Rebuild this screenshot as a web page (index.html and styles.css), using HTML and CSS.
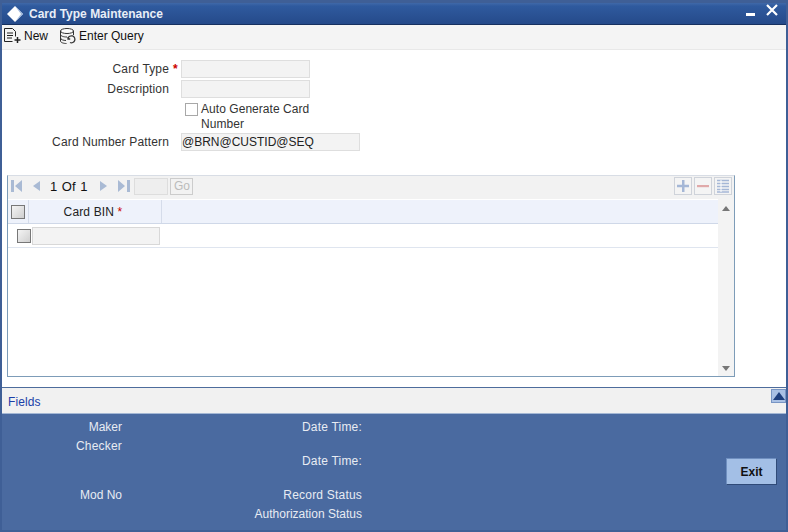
FILE: index.html
```html
<!DOCTYPE html>
<html lang="en">
<head>
<meta charset="utf-8">
<title>Card Type Maintenance</title>
<link rel="stylesheet" href="styles.css">
</head>
<body>
<div class="window">
  <header class="titlebar">
    <svg class="logo" width="20" height="16" viewBox="0 0 20 16"><path d="M10 0 18 8 10 16 2 8Z" fill="#fff"/><path d="M10 0 18 8 10 16 16 8Z" fill="#9db8dc"/></svg>
    <span class="title">Card Type Maintenance</span>
    <svg class="winbtn" width="40" height="16" viewBox="0 0 40 16"><path d="M3 9h9v3H3z" fill="#fff"/><path d="M24 1l10 10M34 1l-10 10" stroke="#fff" stroke-width="2.2" fill="none"/></svg>
  </header>
  <nav class="toolbar">
    <button class="tool">
      <svg width="17" height="15" viewBox="0 0 17 15"><path d="M.5.5h8l3 3v5M.5.5v13h8" fill="none" stroke="#222"/><path d="M3 5h6M3 7.500h6M3 10h5" stroke="#222"/><path d="M13.500 9v6M10.500 12h6" stroke="#222" stroke-width="1.500"/></svg>
      New
    </button>
    <button class="tool">
      <svg width="17" height="16" viewBox="0 0 17 16"><ellipse cx="8" cy="3" rx="6.500" ry="2.500" fill="#fff" stroke="#333"/><path d="M1.500 3v10c0 1.500 3 2.500 6 2.500M14.500 3v4M1.500 6.500c0 1.500 3 2.500 6.500 2.500M1.500 10c0 1.500 3 2.500 5.500 2.500" fill="none" stroke="#333"/><path d="M9 10.500a3.500 3.500 0 1 1 2 4M9 9v2h2.200" fill="none" stroke="#333" stroke-width="1.300"/></svg>
      Enter Query
    </button>
  </nav>
  <main class="form">
    <div class="fields">
      <div class="field">
        <label class="lbl">Card Type</label><span class="req">*</span>
        <input class="input short" type="text" aria-label="Card Type">
      </div>
      <div class="field">
        <label class="lbl">Description</label>
        <input class="input short" type="text" aria-label="Description">
      </div>
      <div class="field check-field">
        <span class="check"></span>
        <span class="check-text">Auto Generate Card Number</span>
      </div>
      <div class="field">
        <label class="lbl">Card Number Pattern</label>
        <input class="input long" type="text" value="@BRN@CUSTID@SEQ" aria-label="Card Number Pattern">
      </div>
    </div>
    <section class="grid-panel">
      <div class="pager">
        <svg class="pg" width="12" height="12" viewBox="0 0 12 12"><path d="M0 0h3v12H0zM11 0v12L4 6z" fill="#a9bad4"/></svg>
        <svg class="pg gap-a" width="9" height="12" viewBox="0 0 9 12"><path d="M8 1v10L1 6z" fill="#a9bad4"/></svg>
        <span class="count">1 Of 1</span>
        <svg class="pg gap-b" width="9" height="12" viewBox="0 0 9 12"><path d="M1 1v10l7-5z" fill="#a9bad4"/></svg>
        <svg class="pg gap-c" width="12" height="12" viewBox="0 0 12 12"><path d="M9 0h3v12H9zM0 0v12l7-6z" fill="#a9bad4"/></svg>
        <span class="pg-input"></span>
        <span class="pg-go">Go</span>
        <span class="pg-tools">
          <span class="pg-btn"><svg width="14" height="14" viewBox="0 0 14 14"><path d="M6 1h2.500v12H6zM1 5.800h12v2.500H1z" fill="#a5b7d6"/></svg></span>
          <span class="pg-btn"><svg width="14" height="14" viewBox="0 0 14 14"><path d="M1 6h12v2.200H1z" fill="#e0a9a9"/></svg></span>
          <span class="pg-btn"><svg width="14" height="14" viewBox="0 0 14 14"><path d="M1 1.500h12M1 4.500h12M1 7.500h12M1 10.500h12M1 13h12" stroke="#a5b7d6" stroke-width="1.500"/><path d="M5 1v12" stroke="#fff"/></svg></span>
        </span>
      </div>
      <div class="table-wrap">
        <div class="table">
          <div class="thead">
            <span class="th-check"><span class="box"></span></span>
            <span class="th-bin">Card BIN <span class="req-inline">*</span></span>
          </div>
          <div class="trow">
            <span class="td-check"><span class="box"></span></span>
            <input class="input bin" type="text" aria-label="Card BIN">
          </div>
        </div>
        <div class="scrollbar">
          <svg width="8" height="5" viewBox="0 0 8 5"><path d="M4 0l4 5H0z" fill="#777"/></svg>
          <svg width="8" height="5" viewBox="0 0 8 5"><path d="M0 0h8L4 5z" fill="#777"/></svg>
        </div>
      </div>
    </section>
  </main>
  <div class="fieldsbar">
    <a class="fields-link">Fields</a>
    <span class="collapse"><svg width="12" height="8" viewBox="0 0 12 8"><path d="M6 0l6 8H0z" fill="#1f3f7e"/></svg></span>
  </div>
  <footer class="footer">
    <div class="audit">
      <span class="a-maker">Maker</span>
      <span class="a-checker wide">Checker</span>
      <span class="a-mod">Mod No</span>
      <span class="a-dt1 wide">Date Time:</span>
      <span class="a-dt2 wide">Date Time:</span>
      <span class="a-rec wide">Record Status</span>
      <span class="a-auth">Authorization Status</span>
    </div>
    <button class="exit">Exit</button>
  </footer>
</div>
</body>
</html>
```
FILE: styles.css
```css
* { box-sizing: border-box; }
html, body { margin: 0; height: 100%; }
body { font-family: "Liberation Sans", Arial, sans-serif; font-size: 12px; color: #222; background: #fff; }
.window { width: 788px; height: 532px; display: flex; flex-direction: column; background: #fff; border-left: 2px solid #3f5f96; border-right: 2px solid #3f5f96; overflow: hidden; }
.titlebar { height: 25px; flex: none; display: flex; align-items: center; padding: 0 0 0 3px; background: linear-gradient(#3f68a8 0, #2f5a9e 15%, #254a8a 100%); border-top: 3px solid #3f5f96; border-bottom: 1px solid #16305f; }
.logo { flex: none; margin-right: 4px; }
.title { flex: 1; color: #e8eef7; font-size: 12px; font-weight: bold; }
.winbtn { flex: none; margin: -3px 3px 0 0; }
.toolbar { height: 25px; flex: none; display: flex; align-items: center; gap: 11px; padding: 0 0 3px 2px; background: #f4f4f4; border-bottom: 1px solid #e8e8e8; }
.tool { display: flex; align-items: center; gap: 3px; padding: 0; border: 0; background: none; font: 12px "Liberation Sans", Arial, sans-serif; color: #111; }
.form { flex: 1; min-height: 0; padding: 9px 0 0 5px; border-bottom: 1px solid #4d6c9c; }
.fields { display: flex; flex-direction: column; height: 116px; }
.field { display: flex; align-items: center; height: 20px; flex: none; }
.lbl { width: 162px; text-align: right; color: #333; letter-spacing: .15px; }
.req { width: 12px; padding-left: 4px; color: #c00; font-weight: bold; line-height: 12px; }
.field .lbl + .input { margin-left: 12px; }
.input { height: 18px; border: 1px solid #dedede; background: #f3f3f3; padding: 0; font: 12px "Liberation Sans", Arial, sans-serif; color: #222; }
.short { width: 129px; }
.long { width: 179px; }
.check-field { height: 33px; align-items: flex-start; padding: 3px 0 0 178px; }
.check { width: 13px; height: 13px; margin-top: 1px; border: 1px solid #a8a8a8; background: #fff; flex: none; }
.check-text { width: 118px; margin-left: 3px; line-height: 15px; color: #333; letter-spacing: .05px; }
.grid-panel { width: 728px; height: 202px; display: flex; flex-direction: column; border: 1px solid #7d9cb8; border-top-color: #d8dde5; }
.pager { height: 23px; flex: none; display: flex; align-items: center; padding: 0 2px 3px 3px; background: #f2f2f2; }
.gap-a { margin-left: 9px; }
.count { margin-left: 9px; font-size: 13px; word-spacing: 1px; color: #111; }
.gap-b { margin-left: 12px; }
.gap-c { margin-left: 10px; }
.pg-input { width: 34px; height: 17px; margin-left: 4px; border: 1px solid #ddd; background: #eee; }
.pg-go { width: 23px; height: 17px; margin-left: 2px; border: 1px solid #ccc; color: #bbb; text-align: center; line-height: 15px; }
.pg-tools { margin-left: auto; display: flex; gap: 2px; }
.pg-btn { width: 18px; height: 18px; display: flex; align-items: center; justify-content: center; border: 1px solid #cfd3da; background: #f4f4f4; }
.table-wrap { flex: 1; min-height: 0; display: flex; background: #fff; }
.table { flex: 1; min-width: 0; padding-top: 1px; }
.thead { height: 24px; display: flex; background: #eef2fb; border-bottom: 1px solid #cfd8e8; }
.th-check { width: 21px; display: flex; align-items: center; justify-content: center; border-right: 1px solid #d5dcea; }
.th-bin { width: 133px; padding-right: 4px; text-align: center; line-height: 24px; border-right: 1px solid #d5dcea; color: #222; letter-spacing: .15px; }
.req-inline { color: #c00; }
.box { width: 14px; height: 14px; border: 1px solid #777; background: linear-gradient(135deg, #f4f4f4, #cfcfcf); display: block; }
.trow { height: 24px; display: flex; align-items: center; border-bottom: 1px solid #dfe5ef; }
.td-check { width: 30px; padding-left: 9px; flex: none; }
.bin { width: 128px; margin-left: -6px; height: 18px; border-color: #d8d8d8; }
.scrollbar { width: 16px; flex: none; display: flex; flex-direction: column; justify-content: space-between; align-items: center; padding: 7px 0 5px; background: #f3f3f3; }
.fieldsbar { height: 26px; flex: none; display: flex; align-items: center; justify-content: space-between; padding: 0 0 0 6px; background: #f1f1f1; border-bottom: 1px solid #a4b7d4; }
.fields-link { color: #1a3fa8; font-size: 12px; margin-top: 2px; letter-spacing: .1px; }
.collapse { width: 15px; height: 14px; display: flex; align-items: center; justify-content: center; align-self: flex-start; margin-top: 1px; background: #a9c0e4; border: 1px solid #7895c4; }
.footer { flex: none; height: 118px; position: relative; display: flex; background: #4a6aa0; border-bottom: 2px solid #3f5f96; color: #e8ecf3; }
.audit { width: 360px; padding-top: 6px; display: grid; grid-template-columns: 120px 240px; grid-template-rows: 19px 15px 34px 19px 19px; align-items: start; justify-items: end; }
.wide { letter-spacing: .2px; }
.a-maker { grid-area: 1 / 1; }
.a-checker { grid-area: 2 / 1; }
.a-mod { grid-area: 4 / 1; }
.a-dt1 { grid-area: 1 / 2; }
.a-dt2 { grid-area: 3 / 2; }
.a-rec { grid-area: 4 / 2; }
.a-auth { grid-area: 5 / 2; }
.exit { position: absolute; left: 724px; top: 44px; width: 51px; height: 27px; border: 1px solid #6f8fc0; border-right-color: #2f4a78; border-bottom-color: #2f4a78; background: #a3bfe6; color: #111; font: bold 12px "Liberation Sans", Arial, sans-serif; }
```
